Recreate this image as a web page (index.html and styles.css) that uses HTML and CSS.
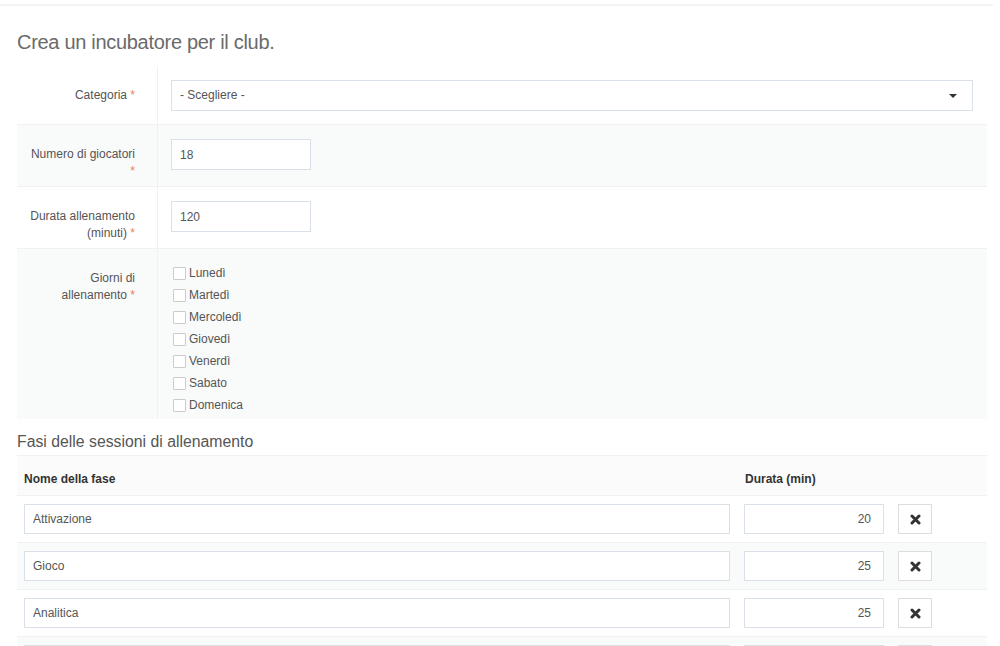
FILE: index.html
```html
<!DOCTYPE html>
<html lang="it">
<head>
	<meta charset="UTF-8">
	<title>Crea un incubatore</title>
	<link rel="stylesheet" href="styles.css">
</head>
<body>
	<div class="topline"></div>
	<main class="page">
		<h2 class="title">Crea un incubatore per il club.</h2>

		<div class="form">
			<div class="row">
				<label class="label">Categoria <span class="req">*</span></label>
				<div class="field">
					<div class="select">- Scegliere -<i class="caret"></i></div>
				</div>
			</div>
			<div class="row alt">
				<label class="label">Numero di giocatori<br><span class="req">*</span></label>
				<div class="field">
					<input class="input small" type="text" value="18">
				</div>
			</div>
			<div class="row">
				<label class="label">Durata allenamento<br>(minuti) <span class="req">*</span></label>
				<div class="field">
					<input class="input small" type="text" value="120">
				</div>
			</div>
			<div class="row alt last">
				<label class="label">Giorni di<br>allenamento <span class="req">*</span></label>
				<div class="field days">
					<label class="day"><i class="check"></i>Lunedì</label>
					<label class="day"><i class="check"></i>Martedì</label>
					<label class="day"><i class="check"></i>Mercoledì</label>
					<label class="day"><i class="check"></i>Giovedì</label>
					<label class="day"><i class="check"></i>Venerdì</label>
					<label class="day"><i class="check"></i>Sabato</label>
					<label class="day"><i class="check"></i>Domenica</label>
				</div>
			</div>
		</div>

		<h4 class="subtitle">Fasi delle sessioni di allenamento</h4>

		<div class="phases">
			<div class="prow head">
				<span>Nome della fase</span>
				<span>Durata (min)</span>
				<span></span>
			</div>
			<div class="prow">
				<input class="input" type="text" value="Attivazione">
				<input class="input num" type="text" value="20">
				<button class="del"><svg width="11" height="11" viewBox="0 0 11 11"><path d="M2 2L9 9M9 2L2 9" stroke="#333" stroke-width="3" stroke-linecap="round"/></svg></button>
			</div>
			<div class="prow alt">
				<input class="input" type="text" value="Gioco">
				<input class="input num" type="text" value="25">
				<button class="del"><svg width="11" height="11" viewBox="0 0 11 11"><path d="M2 2L9 9M9 2L2 9" stroke="#333" stroke-width="3" stroke-linecap="round"/></svg></button>
			</div>
			<div class="prow">
				<input class="input" type="text" value="Analitica">
				<input class="input num" type="text" value="25">
				<button class="del"><svg width="11" height="11" viewBox="0 0 11 11"><path d="M2 2L9 9M9 2L2 9" stroke="#333" stroke-width="3" stroke-linecap="round"/></svg></button>
			</div>
			<div class="prow alt">
				<input class="input" type="text" value="">
				<input class="input num" type="text" value="">
				<button class="del"></button>
			</div>
		</div>
	</main>
</body>
</html>
```

FILE: styles.css
```css
html,body{
	margin: 0;
	padding: 0;
	background: #fff;
	overflow: hidden;
}
body{
	font-family: "Liberation Sans", Arial, sans-serif;
	font-size: 12px;
	color: #555;
}
.topline{
	width: 993px;
	height: 4px;
	border-bottom: 2px solid #f1f3f4;
}
.page{
	width: 970px;
	padding-left: 17px;
}
.title{
	margin: 0;
	padding: 24px 0 12px;
	font-size: 20px;
	font-weight: normal;
	line-height: 24px;
	color: #6a6a6a;
	letter-spacing: -0.3px;
}
/* form rows */
.row{
	display: flex;
	border-bottom: 1px solid #eff1f2;
}
.row.last{
	border-bottom: none;
}
.alt{
	background: #f9fafa;
}
.label{
	width: 118px;
	flex: none;
	padding: 21px 22px 6px 0;
	border-right: 1px solid #eff1f2;
	text-align: right;
	line-height: 17px;
	color: #555;
}
.req{
	color: #f07f4f;
}
.field{
	flex: 1;
	padding: 14px 14px 13px 13px;
}
.input{
	box-sizing: border-box;
	height: 31px;
	padding: 0 8px;
	border: 1px solid #d9e0e8;
	border-radius: 0;
	background: #fff;
	font-family: "Liberation Sans", Arial, sans-serif;
	font-size: 12px;
	color: #555;
	outline: none;
}
.input.small{
	width: 140px;
	display: block;
}
.select{
	position: relative;
	box-sizing: border-box;
	height: 31px;
	padding: 0 8px;
	border: 1px solid #d9e0e8;
	background: #fff;
	line-height: 29px;
	color: #555;
}
.caret{
	position: absolute;
	right: 15px;
	top: 13px;
	width: 0;
	height: 0;
	border-left: 4px solid transparent;
	border-right: 4px solid transparent;
	border-top: 4px solid #333;
}
/* days */
.days{
	padding: 13px 14px 3px 15px;
}
.day{
	display: flex;
	align-items: center;
	height: 22px;
	color: #555;
}
.check{
	box-sizing: border-box;
	width: 13px;
	height: 13px;
	margin-right: 3px;
	border: 1px solid #ccc;
	border-radius: 1px;
	background: #fff;
}
/* phases */
.subtitle{
	margin: 0;
	padding: 14px 0 4px;
	font-size: 15.8px;
	font-weight: normal;
	line-height: 18px;
	color: #555;
	border-bottom: 1px solid #eff1f2;
}
.prow{
	display: grid;
	grid-template-columns: 706px 140px 34px;
	column-gap: 14px;
	padding: 8px 7px;
	border-bottom: 1px solid #eff1f2;
}
.prow .input,.prow .del{
	height: 30px;
}
.prow.head{
	height: 22px;
	padding-top: 12px;
	padding-bottom: 5px;
	background: #fbfbfc;
	font-weight: bold;
	color: #333;
	line-height: 22px;
}
.prow.head span:nth-child(2){
	padding-left: 1px;
}
.num{
	text-align: right;
	padding-right: 12px;
}
.del{
	box-sizing: border-box;
	padding: 0;
	border: 1px solid #dddddd;
	background: #fff;
	display: flex;
	align-items: center;
	justify-content: center;
}
```
